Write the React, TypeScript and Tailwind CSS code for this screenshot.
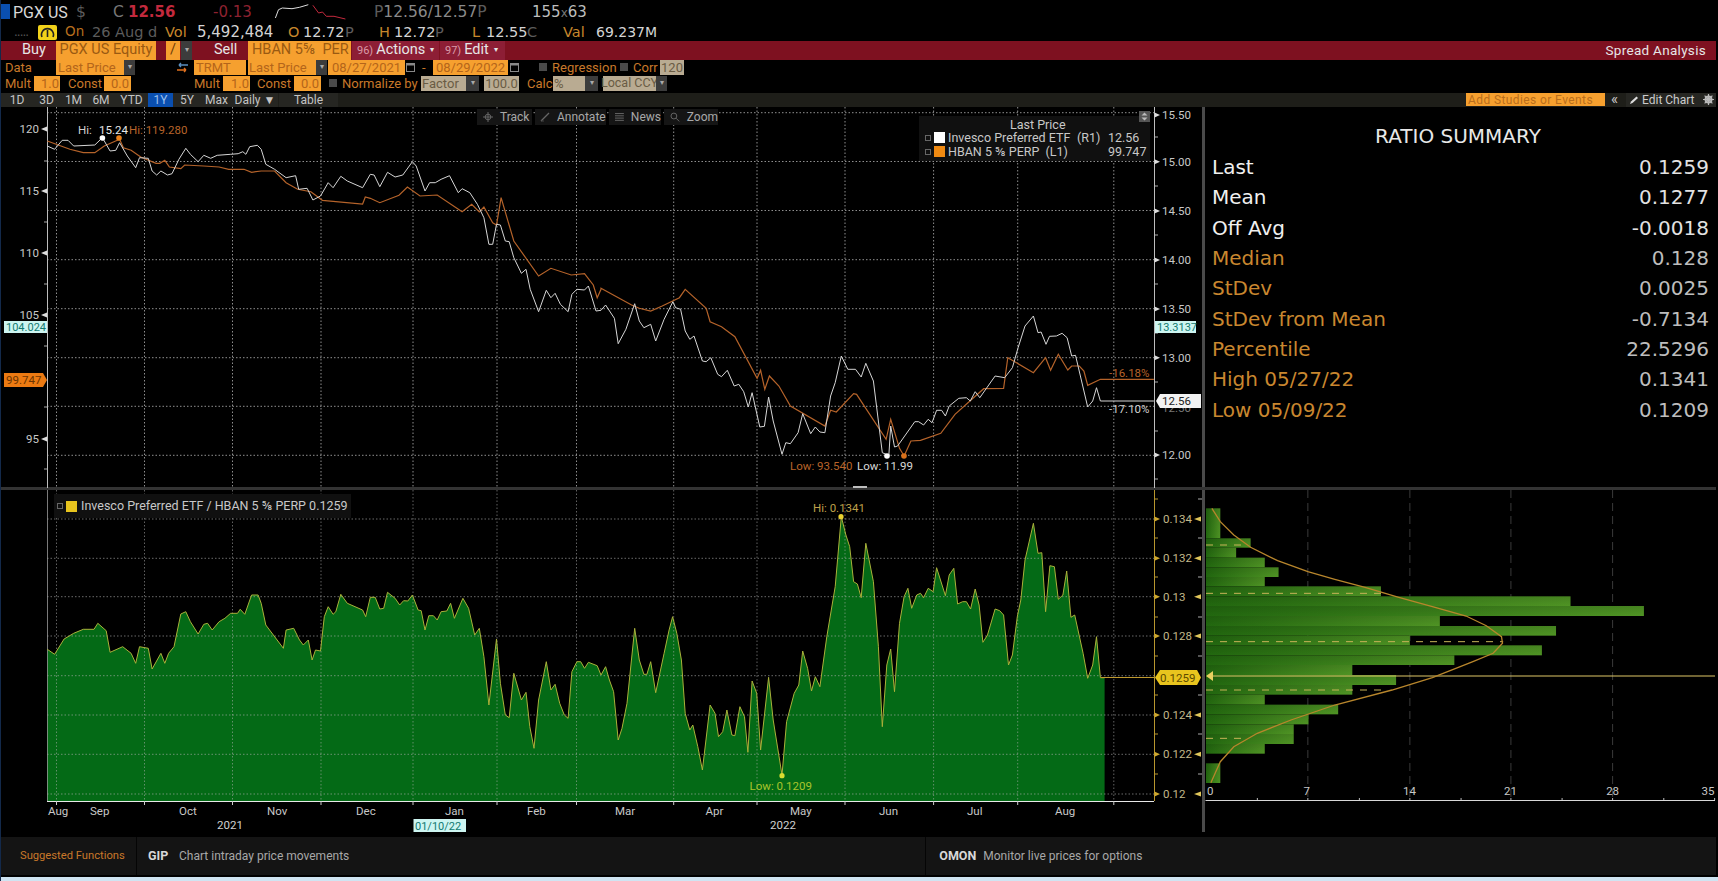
import React from 'react';

const DEJAVU = "font-[family-name:'DejaVu_Sans',sans-serif]";

// series were read off zoomed crops, so convert back to page coordinates
type P = [number, number];
const conv = (pts: P[], xOff: number, yOff: number): P[] =>
  pts.map(([x, y]) => [xOff + (x * 600) / 1568, yOff + y / 3] as P);
const toPts = (pts: P[]) => pts.map(([x, y]) => `${x.toFixed(1)},${y.toFixed(1)}`).join(' ');

const whiteSeries: P[] = [
  ...conv([[121,135],[140,145],[160,118],[175,118],[190,135],[245,132],[265,110],[285,150],[300,148],[310,125],[330,165],[352,200],[362,170],[385,172],[395,210],[407,222],[418,210],[435,222],[447,218],[465,175],[483,142],[495,160],[515,182],[530,163],[548,172],[565,163],[600,160],[620,158],[632,152],[640,160],[650,137],[670,133],[680,145],[692,190],[715,205],[745,230],[770,224],[778,265],[800,262],[815,297],[835,285],[855,245],[868,260],[888,226],[905,240],[945,260],[965,220],[975,222],[990,257],[1010,214],[1030,228],[1050,222],[1075,182],[1085,195],[1108,270],[1120,245],[1135,245],[1150,235],[1172,224],[1195,275],[1205,263],[1225,275],[1245,310],[1262,350],[1275,430],[1285,430],[1295,370],[1305,372],[1318,420],[1328,422],[1340,470],[1360,517],[1372,505],[1383,565],[1405,632],[1425,568],[1437,590],[1448,577],[1462,610],[1482,632],[1492,580],[1505,565],[1525,567],[1535,555],[1555,630],[1568,628]], 0, 100),
  ...conv([[12,462],[35,502],[45,578],[65,535],[88,458],[100,510],[112,530],[130,520],[143,570],[165,505],[188,452],[195,470],[208,475],[220,540],[232,565],[243,555],[265,630],[275,632],[287,620],[305,670],[315,677],[330,658],[348,705],[360,700],[373,722],[385,768],[395,725],[415,828],[427,826],[438,738],[450,810],[473,910],[483,875],[495,878],[515,845],[527,788],[548,848],[560,828],[572,843],[585,845],[600,735],[612,695],[628,615],[645,655],[665,655],[680,678],[692,637],[712,690],[735,905],[745,910],[752,915],[757,825],[767,888],[775,885],[820,812],[830,812],[843,822],[855,805],[865,815],[877,778],[890,778],[900,795],[910,765],[935,742],[955,740],[965,750],[978,722],[990,740],[1030,675],[1055,680],[1075,650],[1090,590],[1108,525],[1130,495],[1142,545],[1150,543],[1163,580],[1172,556],[1190,555],[1205,547],[1218,560],[1230,615],[1240,613],[1272,768],[1285,750],[1295,710],[1305,750],[1445,750]], 600, 150),
];

const orangeSeries: P[] = [
  ...conv([[121,120],[180,145],[215,155],[245,155],[270,135],[310,115],[320,140],[340,148],[365,168],[405,187],[415,187],[428,178],[440,198],[470,203],[480,192],[530,195],[570,198],[595,205],[635,205],[655,214],[680,210],[715,210],[745,245],[775,265],[810,272],[840,298],[945,309],[952,288],[965,292],[990,305],[1040,283],[1062,258],[1095,285],[1140,282],[1205,332],[1230,310],[1250,333],[1262,318],[1285,365],[1295,372],[1307,290],[1340,420],[1405,525],[1437,502],[1490,522],[1525,518],[1548,552],[1558,590],[1568,565]], 0, 100),
  ...conv([[0,412],[80,462],[100,472],[130,480],[160,465],[205,440],[220,415],[275,472],[285,512],[315,527],[350,557],[408,682],[417,658],[428,715],[440,675],[465,705],[495,765],[585,825],[600,778],[615,783],[660,728],[668,730],[745,865],[757,805],[780,892],[792,915],[810,870],[835,868],[888,847],[925,790],[1000,713],[1052,712],[1063,620],[1130,665],[1162,620],[1175,658],[1195,610],[1220,657],[1230,645],[1250,645],[1262,660],[1272,703],[1305,685],[1445,685]], 600, 150),
];

const ratioSeries: P[] = [
  ...conv([[121,478],[140,493],[165,447],[190,430],[215,418],[243,418],[253,400],[275,422],[285,487],[318,470],[340,490],[352,520],[362,470],[385,475],[395,537],[418,490],[428,520],[438,490],[452,470],[470,372],[483,365],[495,395],[515,432],[530,403],[540,400],[552,420],[570,395],[585,385],[600,370],[618,370],[625,358],[637,373],[655,315],[672,315],[680,340],[692,405],[738,475],[745,420],[765,415],[780,450],[790,465],[803,450],[813,510],[822,480],[835,483],[845,380],[855,350],[868,373],[875,365],[888,313],[905,340],[945,360],[953,380],[965,322],[978,322],[990,357],[1000,355],[1010,307],[1030,325],[1042,345],[1052,332],[1063,333],[1075,315],[1090,360],[1098,362],[1108,420],[1118,377],[1130,377],[1140,390],[1150,365],[1165,363],[1175,340],[1185,385],[1207,325],[1222,355],[1238,435],[1250,415],[1262,500],[1275,645],[1295,447],[1305,580],[1318,675],[1328,683],[1340,550],[1360,630],[1372,607],[1382,710],[1393,775],[1405,630],[1425,515],[1437,600],[1448,583],[1460,640],[1472,675],[1482,685],[1492,545],[1505,515],[1515,515],[1525,535],[1535,517],[1558,527],[1568,555]], 0, 490),
  ...conv([[12,530],[22,570],[33,605],[45,750],[55,715],[68,640],[88,415],[100,510],[112,553],[120,553],[130,515],[143,608],[165,490],[178,420],[187,380],[198,430],[210,510],[220,670],[232,720],[240,705],[253,770],[265,840],[285,645],[298,670],[307,740],[318,725],[329,660],[342,735],[350,737],[363,650],[375,680],[384,787],[395,573],[407,610],[417,780],[438,562],[450,690],[473,855],[485,695],[505,610],[517,585],[527,483],[540,535],[550,603],[560,560],[572,590],[590,440],[612,290],[628,80],[640,135],[650,170],[660,275],[670,282],[680,323],[692,160],[712,275],[725,470],[735,710],[747,525],[757,477],[767,605],[780,400],[792,320],[802,295],[812,355],[825,315],[835,310],[843,323],[855,295],[868,305],[877,233],[900,317],[910,255],[922,235],[932,342],[945,335],[955,335],[966,357],[978,297],[988,345],[998,457],[1010,435],[1030,357],[1042,362],[1052,375],[1065,525],[1075,495],[1088,380],[1097,330],[1108,210],[1130,100],[1142,190],[1152,188],[1162,365],[1173,227],[1185,230],[1195,328],[1207,315],[1217,243],[1228,382],[1238,375],[1260,490],[1272,565],[1285,525],[1295,440],[1305,563],[1316,563]], 600, 490),
];

const vGrid = [55.5, 143.5, 231.5, 320, 412, 496, 575.5, 672.7, 756, 844, 932.6, 1016.7, 1112.8];
const upperH = [111.7, 160.5, 209.5, 258.7, 307.7, 356.7, 405.3, 454.3];
const lowerH = [519, 558.3, 596.7, 636, 675.7, 715, 754.3, 794];

const Dd = ({ cls = '' }: { cls?: string }) => (
  <span className={`flex h-full items-center justify-center bg-[#3c3c3c] text-[8px] text-[#aaa] ${cls}`}>▾</span>
);

const Cal = ({ cls = '' }: { cls?: string }) => (
  <span className={`flex h-full items-center justify-center ${cls}`}>
    <svg width="9" height="10" viewBox="0 0 9 10">
      <rect x="0.5" y="1.5" width="8" height="8" fill="none" stroke="#888" />
      <rect x="0.5" y="1" width="8" height="2.5" fill="#888" />
    </svg>
  </span>
);

const Check = ({ cls = '' }: { cls?: string }) => <span className={`h-[8px] w-[8px] bg-[#4a4a4a] ${cls}`} />;

function TopRows() {
  return (
    <div className={`${DEJAVU} flex h-[41px] flex-col`}>
      <div className="flex h-[25px] items-center whitespace-nowrap text-[15.5px] leading-none">
        <span className="mb-[3px] h-[15px] w-[9px] bg-[#0a4fb0]" />
        <span className="ml-[3px] w-[52px] text-[#d8d8d8] font-[family-name:Roboto,sans-serif] text-[16px]">PGX US</span>
        <span className="ml-[11px] w-[8px] text-[#5c5c5c]">$</span>
        <span className="ml-[29px] w-[7px] text-[#777]">C</span>
        <span className="ml-[8px] w-[46px] font-bold text-[#c3293d] text-[15px]">12.56</span>
        <span className="ml-[39px] w-[41px] text-[#8e2230] text-[15px]">-0.13</span>
        <svg className="ml-[20px]" width="72" height="22" viewBox="273 4 72 22">
          <polyline points="274.4,20 277.5,11.7 281.3,10 291,10.7 298.5,9.3 307.3,6.7" fill="none" stroke="#ddd" strokeWidth="1" />
          <polyline points="311.9,7.3 317.6,15 321.5,14 325.3,18.3 333,18.3 344.4,21" fill="none" stroke="#c3293d" strokeWidth="1" />
        </svg>
        <span className="ml-[28px] w-[115px] text-[#8a8a8a]"><span className="text-[#5c5c5c]">P</span>12.56/12.57<span className="text-[#5c5c5c]">P</span></span>
        <span className="ml-[43px] text-[#bdbdbd] text-[15px]">155<span className="text-[#777] text-[12px]">x</span>63</span>
      </div>
      <div className="flex h-[14px] items-center whitespace-nowrap text-[14.5px] leading-none">
        <span className="ml-[13px] w-[21px] overflow-hidden text-[#555] text-[12px] tracking-[-1px]">.....</span>
        <span className="ml-[3px] flex h-[15px] w-[19px] items-center justify-center rounded-[2px] bg-[#f2d21a]">
          <svg width="15" height="13" viewBox="0 0 15 13">
            <path d="M2 11 A6 6 0 1 1 13 11" fill="none" stroke="#222" strokeWidth="1.6" />
            <path d="M7.5 11 L7.5 4" stroke="#222" strokeWidth="1.6" />
          </svg>
        </span>
        <span className="ml-[8px] w-[18px] text-[#b86f1e] text-[13.5px]">On</span>
        <span className="ml-[9px] w-[66px] text-[#5c5c5c]">26 Aug d</span>
        <span className="ml-[7px] w-[24px] text-[#c8872c]">Vol</span>
        <span className="ml-[8px] w-[78px] text-[#d4d4d4] text-[15px]">5,492,484</span>
        <span className="ml-[13px] w-[8px] text-[#c8872c]">O</span>
        <span className="ml-[7px] w-[42px] text-[#d4d4d4]">12.72</span>
        <span className="w-[9px] text-[#5c5c5c]">P</span>
        <span className="ml-[25px] w-[8px] text-[#c8872c]">H</span>
        <span className="ml-[7px] w-[41px] text-[#d4d4d4]">12.72</span>
        <span className="w-[11px] text-[#5c5c5c]">P</span>
        <span className="ml-[26px] w-[6px] text-[#c8872c]">L</span>
        <span className="ml-[8px] w-[41px] text-[#d4d4d4]">12.55</span>
        <span className="w-[9px] text-[#5c5c5c]">C</span>
        <span className="ml-[27px] w-[23px] text-[#c8872c]">Val</span>
        <span className="ml-[10px] text-[#d4d4d4] text-[14px]">69.237M</span>
      </div>
    </div>
  );
}

function RedBar() {
  return (
    <div className="flex h-[19px] w-[1715px] items-stretch whitespace-nowrap bg-[#7e1120] text-[14.5px] leading-none text-[#e6e6e6]">
      <span className="flex w-[55px] items-center pl-[21px]">Buy</span>
      <span className="flex w-[100px] items-center justify-center bg-[#f6a02f] text-[#9a5a12]">PGX US Equity</span>
      <span className="ml-[10px] flex w-[14px] items-center justify-center bg-[#f6a02f] text-[#6e3c08]">/</span>
      <Dd cls="ml-[1px] w-[11px] !h-auto" />
      <span className="ml-[22px] flex w-[34px] items-center">Sell</span>
      <span className="flex w-[103px] items-center overflow-hidden bg-[#f6a02f] pl-[4px] text-[#9a5a12]">HBAN 5⅝&nbsp;&nbsp;PER</span>
      <span className="ml-[1px] flex w-[87px] items-center bg-[#8d1e35] pl-[5px]"><span className="text-[11px] text-[#d99aa8]">96)</span><span className="ml-[3px]">Actions</span><span className="ml-[5px] text-[8px]">▾</span></span>
      <span className="ml-[1px] flex w-[65px] items-center bg-[#8d1e35] pl-[5px]"><span className="text-[11px] text-[#d99aa8]">97)</span><span className="ml-[3px]">Edit</span><span className="ml-[5px] text-[8px]">▾</span></span>
      <span className="ml-auto flex items-center pr-[10px] text-[13.5px] tracking-[0.3px]">Spread Analysis</span>
    </div>
  );
}

function ParamRows() {
  const org = 'flex h-full items-center bg-[#f6a02f] text-[#b4651a]';
  const tan = 'flex h-full items-center bg-[#b9ab92] text-[#6a5c44]';
  const lbl = 'text-[#c8782a]';
  return (
    <div className="flex flex-col whitespace-nowrap text-[13px] leading-none">
      <div className="flex h-[15px] items-center">
        <span className={`ml-[4px] w-[24px] ${lbl}`}>Data</span>
        <span className={`ml-[27px] w-[68px] pl-[2px] ${org}`}>Last Price</span>
        <Dd cls="w-[11px]" />
        <span className="ml-[38px] flex h-full w-[19px] items-center justify-center">
          <svg width="15" height="11" viewBox="0 0 15 11">
            <path d="M13 3 H4 M4 3 L6 1 M4 3 L6 5" stroke="#5b8fc0" strokeWidth="1.4" fill="none" />
            <path d="M2 8 H11 M11 8 L9 6 M11 8 L9 10" stroke="#e0701e" strokeWidth="1.4" fill="none" />
          </svg>
        </span>
        <span className={`ml-[2px] w-[52px] pl-[2px] ${org}`}>TRMT</span>
        <span className={`ml-[2px] w-[68px] pl-[1px] ${org}`}>Last Price</span>
        <Dd cls="w-[11px]" />
        <span className={`ml-[1px] w-[77px] justify-center ${org}`}>08/27/2021</span>
        <Cal cls="w-[11px]" />
        <span className="ml-[6px] w-[11px] text-[#c8782a]">-</span>
        <span className={`w-[75px] justify-center ${org}`}>08/29/2022</span>
        <Cal cls="w-[12px]" />
        <Check cls="ml-[19px]" />
        <span className={`ml-[5px] w-[60px] ${lbl}`}>Regression</span>
        <Check cls="ml-[8px]" />
        <span className={`ml-[5px] w-[22px] ${lbl}`}>Corr</span>
        <span className={`ml-[5px] w-[24px] justify-center ${tan}`}>120</span>
      </div>
      <div className="mt-[1px] flex h-[15px] items-center">
        <span className={`ml-[4px] w-[23px] ${lbl}`}>Mult</span>
        <span className={`ml-[6px] w-[26px] justify-end pr-[1px] ${org}`}>1.0</span>
        <span className={`ml-[8px] w-[29px] ${lbl}`}>Const</span>
        <span className={`ml-[7px] w-[27px] justify-end pr-[2px] ${org}`}>0.0</span>
        <span className={`ml-[63px] w-[23px] ${lbl}`}>Mult</span>
        <span className={`ml-[6px] w-[27px] justify-end pr-[1px] ${org}`}>1.0</span>
        <span className={`ml-[7px] w-[31px] ${lbl}`}>Const</span>
        <span className={`ml-[6px] w-[27px] justify-end pr-[2px] ${org}`}>0.0</span>
        <Check cls="ml-[8px]" />
        <span className={`ml-[5px] w-[73px] ${lbl}`}>Normalize by</span>
        <span className={`ml-[6px] w-[45px] pl-[1px] ${tan}`}>Factor</span>
        <Dd cls="w-[13px]" />
        <span className={`ml-[5px] w-[35px] justify-center ${tan}`}>100.0</span>
        <span className={`ml-[8px] w-[22px] ${lbl}`}>Calc</span>
        <span className={`ml-[4px] w-[32px] pl-[1px] ${tan}`}>%</span>
        <Dd cls="w-[13px]" />
        <span className={`ml-[5px] w-[53px] justify-center text-[12.5px] ${tan}`}>Local CCY</span>
        <Dd cls="w-[11px]" />
      </div>
    </div>
  );
}

function TabBar() {
  const t = 'flex h-full items-center justify-center bg-[#262622] text-[#c4c4c4]';
  return (
    <div className="mt-[2px] flex h-[14px] w-[1715px] items-center whitespace-nowrap bg-[#1e1e19] text-[12px] leading-none">
      <span className={`w-[32px] ${t}`}>1D</span>
      <span className={`w-[27px] ${t}`}>3D</span>
      <span className={`w-[27px] ${t}`}>1M</span>
      <span className={`w-[28px] ${t}`}>6M</span>
      <span className={`w-[33px] ${t}`}>YTD</span>
      <span className="flex h-full w-[25px] items-center justify-center bg-[#0a4fb0] text-[#9cc0ee]">1Y</span>
      <span className={`w-[28px] ${t}`}>5Y</span>
      <span className={`w-[31px] ${t}`}>Max</span>
      <span className={`w-[46px] ${t}`}>Daily ▼</span>
      <span className={`ml-[1px] w-[59px] ${t}`}>Table</span>
      <span className="ml-auto flex h-[13px] w-[139px] items-center bg-[#f6a02f] pl-[2px] text-[#b96e1c] tracking-[0.4px]">Add Studies or Events</span>
      <span className="ml-[6px] w-[9px] text-[15px] text-[#ccc]">«</span>
      <span className="ml-[6px] flex h-full w-[90px] items-center bg-[#262622] pl-[3px] text-[#ccc]">
        <svg width="11" height="10" viewBox="0 0 11 10"><path d="M1 9 L2 6.5 L7.5 1.5 L9 3 L3.5 8 Z" fill="#ddd" /></svg>
        <span className="ml-[2px]">Edit Chart</span>
        <svg className="ml-[8px]" width="11" height="11" viewBox="0 0 11 11">
          <circle cx="5.5" cy="5.5" r="3" fill="none" stroke="#bbb" strokeWidth="2" />
          <path d="M5.5 0 V11 M0 5.5 H11 M1.6 1.6 L9.4 9.4 M9.4 1.6 L1.6 9.4" stroke="#bbb" strokeWidth="1.2" />
        </svg>
      </span>
    </div>
  );
}

function UpperChart() {
  const leftLabels: [string, number][] = [['120', 128], ['115', 190], ['110', 252], ['105', 314], ['95', 438]];
  const leftMinor = [160, 221, 283, 345, 406, 468];
  const rightLabels: [string, number][] = [['15.50', 114], ['15.00', 160.7], ['14.50', 210], ['14.00', 259], ['13.50', 308], ['13.00', 356.7], ['12.00', 454]];
  const rightMinor = [136, 185, 234, 283, 332, 381, 430, 478];
  return (
    <svg className="absolute inset-0" width="1202" height="381" viewBox="0 106 1202 381" fontSize="11.5">
      {upperH.map(y => <line key={y} x1="46" x2="1153" y1={y} y2={y} stroke="#8f8f8f" strokeDasharray="1.5 2" />)}
      {vGrid.map(x => <line key={x} x1={x} x2={x} y1="106" y2="487" stroke="#8f8f8f" strokeDasharray="1.5 2" />)}
      <line x1="46.5" x2="46.5" y1="106" y2="487" stroke="#bdbdbd" />
      <line x1="1153.5" x2="1153.5" y1="106" y2="487" stroke="#bdbdbd" />
      {leftLabels.map(([t, y]) => (
        <g key={t}>
          <text x="38" y={y + 4} textAnchor="end" fill="#c8c8c8">{t}</text>
          <polygon points={`46,${y - 2.5} 46,${y + 2.5} 40,${y}`} fill="#ddd" />
        </g>
      ))}
      {leftMinor.map(y => <line key={y} x1="43" x2="46" y1={y} y2={y} stroke="#aaa" />)}
      {rightLabels.map(([t, y]) => (
        <g key={t}>
          <text x="1161" y={y + 4} fill="#c8c8c8">{t}</text>
          <polygon points={`1153.5,${y - 2.5} 1153.5,${y + 2.5} 1159,${y}`} fill="#ddd" />
        </g>
      ))}
      {rightMinor.map(y => <line key={y} x1="1154" x2="1157" y1={y} y2={y} stroke="#aaa" />)}
      <text x="1161" y="411" fill="#777">12.50</text>
      <polyline points={toPts(orangeSeries)} fill="none" stroke="#b5632a" strokeWidth="1.2" />
      <polyline points={toPts(whiteSeries)} fill="none" stroke="#d6d6d6" strokeWidth="1" />
      <circle cx="101.4" cy="137" r="2.8" fill="#fff" />
      <circle cx="118" cy="137" r="2.8" fill="#e8801a" />
      <circle cx="886" cy="455" r="2.8" fill="#fff" />
      <circle cx="903" cy="455" r="2.8" fill="#d9701a" />
      <text x="77" y="133" fill="#d0d0d0">Hi:</text>
      <text x="98" y="133" fill="#e6e6e6">15.24</text>
      <text x="128" y="133" fill="#b8642a">Hi: 119.280</text>
      <text x="789" y="469" fill="#b8642a">Low: 93.540</text>
      <text x="856" y="469" fill="#d8d8d8">Low: 11.99</text>
      <text x="1108" y="376" fill="#b8642a">-16.18%</text>
      <text x="1108" y="412" fill="#d0d0d0">-17.10%</text>
      <rect x="3" y="320" width="43" height="12" fill="#cdf5f1" />
      <text x="5" y="330" fill="#127a70" fontSize="11">104.024</text>
      <polygon points="3,372 42,372 46,379 42,386 3,386" fill="#ec7a12" />
      <text x="5" y="383" fill="#6b3400">99.747</text>
      <rect x="1154" y="320" width="41" height="12" fill="#cdf5f1" />
      <text x="1156" y="330" fill="#127a70" fontSize="11">13.3137</text>
      <polygon points="1155,400 1159,393 1200,393 1200,407 1159,407" fill="#f2f2f2" />
      <text x="1161" y="404" fill="#222">12.56</text>
      <rect x="852" y="485" width="14" height="2" fill="#bdbdbd" />
    </svg>
  );
}

function ChartToolbar() {
  const b = 'flex h-[16px] items-center bg-[#151515] text-[12px] text-[#a8a8a8] leading-none';
  return (
    <div className="absolute left-[476px] top-[2px] flex whitespace-nowrap">
      <span className={`${b} w-[55px] pl-[6px]`}>
        <svg className="mr-[7px]" width="10" height="10" viewBox="0 0 10 10">
          <circle cx="5" cy="5" r="2.8" fill="none" stroke="#666" />
          <path d="M5 0 V10 M0 5 H10" stroke="#666" />
        </svg>
        Track
      </span>
      <span className={`${b} ml-[3px] w-[71px] pl-[5px]`}>
        <svg className="mr-[7px]" width="10" height="10" viewBox="0 0 10 10">
          <path d="M1 9 L9 1" stroke="#666" strokeWidth="1.2" />
          <path d="M1 9 H4" stroke="#444" />
        </svg>
        Annotate
      </span>
      <span className={`${b} ml-[3px] w-[52px] pl-[6px]`}>
        <svg className="mr-[7px]" width="9" height="10" viewBox="0 0 9 10">
          <path d="M0 1.5 H9 M0 3.8 H9 M0 6.1 H9 M0 8.4 H9" stroke="#666" />
        </svg>
        News
      </span>
      <span className={`${b} ml-[3px] w-[54px] pl-[6px]`}>
        <svg className="mr-[7px]" width="10" height="10" viewBox="0 0 10 10">
          <circle cx="4" cy="4" r="3" fill="none" stroke="#666" />
          <path d="M6.2 6.2 L9.5 9.5" stroke="#666" />
        </svg>
        Zoom
      </span>
    </div>
  );
}

function Legend() {
  return (
    <div className="absolute left-[918px] top-[9px] w-[231px] whitespace-nowrap bg-[#101010] pb-[2px] text-[12.5px] leading-[14px] text-[#c8c8c8]">
      <div className="ml-[91px] h-[15px] pt-[2px]">Last Price</div>
      <div className="flex h-[14px] items-center">
        <span className="ml-[6px] h-[6px] w-[6px] border border-[#666]" />
        <span className="ml-[3px] h-[11px] w-[11px] bg-white" />
        <span className="ml-[3px] w-[129px]">Invesco Preferred ETF</span>
        <span className="w-[31px]">(R1)</span>
        <span>12.56</span>
      </div>
      <div className="flex h-[14px] items-center">
        <span className="ml-[6px] h-[6px] w-[6px] border border-[#666]" />
        <span className="ml-[3px] h-[11px] w-[11px] bg-[#f08a12]" />
        <span className="ml-[3px] w-[129px]">HBAN 5 ⅝ PERP&nbsp; (L1)</span>
        <span className="w-[31px]" />
        <span>99.747</span>
      </div>
    </div>
  );
}

function LowerChart() {
  const rightLabels: [string, number][] = [['0.134', 519], ['0.132', 558.3], ['0.13', 596.7], ['0.128', 636], ['0.124', 715], ['0.122', 754.3], ['0.12', 794]];
  const minor = [499, 538, 577, 617, 656, 695, 734, 774];
  const months: [string, number][] = [['Aug', 47], ['Sep', 89], ['Oct', 178], ['Nov', 266], ['Dec', 355], ['Jan', 444], ['Feb', 526], ['Mar', 614], ['Apr', 704.5], ['May', 789], ['Jun', 878], ['Jul', 966], ['Aug', 1054]];
  const line = toPts(ratioSeries);
  return (
    <svg className="absolute inset-0" width="1202" height="347" viewBox="0 490 1202 347" fontSize="11.5">
      <polygon points={`46,801 ${line} 1103.6,801`} fill="#046a16" />
      {lowerH.map(y => <line key={y} x1="46" x2="1153" y1={y} y2={y} stroke="#b0b0b0" strokeOpacity="0.6" strokeDasharray="1.5 2" />)}
      {vGrid.map(x => <line key={x} x1={x} x2={x} y1="490" y2="801" stroke="#b0b0b0" strokeOpacity="0.55" strokeDasharray="1.5 2" />)}
      <line x1="46.5" x2="46.5" y1="490" y2="801" stroke="#999" strokeOpacity="0.8" />
      <polyline points={line} fill="none" stroke="#aab13a" strokeWidth="1" />
      <line x1="1100" x2="1153" y1="677.5" y2="677.5" stroke="#c09a2e" />
      <line x1="46" x2="1153" y1="801.5" y2="801.5" stroke="#e8e8e8" />
      {vGrid.map(x => <line key={x} x1={x} x2={x} y1="801" y2="805" stroke="#ccc" />)}
      <line x1="1153.5" x2="1153.5" y1="490" y2="801" stroke="#b8962e" />
      {rightLabels.map(([t, y]) => (
        <g key={t}>
          <text x="1162" y={y + 4} fill="#c4b98a">{t}</text>
          <polygon points={`1153.5,${y - 2.5} 1153.5,${y + 2.5} 1159,${y}`} fill="#d0a92e" />
          <polygon points={`1200,${y - 2.5} 1200,${y + 2.5} 1193,${y}`} fill="#e0c65a" />
        </g>
      ))}
      {minor.map(y => (
        <g key={y}>
          <line x1="1154" x2="1157" y1={y} y2={y} stroke="#b8962e" />
          <line x1="1197" x2="1201" y1={y} y2={y} stroke="#aaa" />
        </g>
      ))}
      <polygon points="1154,677.5 1159,670 1196,670 1200,677.5 1196,685 1159,685" fill="#e8c41e" />
      <text x="1159" y="682" fill="#5c4a00">0.1259</text>
      <circle cx="840" cy="516.7" r="2.6" fill="#e8d030" />
      <circle cx="781" cy="775.7" r="2.6" fill="#d8dc30" />
      <text x="812" y="512" fill="#bfa04a">Hi: 0.1341</text>
      <text x="748.5" y="789.5" fill="#a8c42c">Low: 0.1209</text>
      {months.map(([t, x]) => <text key={`${t}${x}`} x={x} y="815" fill="#c8c8c8">{t}</text>)}
      <text x="216" y="829" fill="#d0d0d0">2021</text>
      <text x="769" y="829" fill="#d0d0d0">2022</text>
      <rect x="412.5" y="819" width="52.5" height="13" fill="#cdf5f1" />
      <text x="414" y="829.5" fill="#127a70" fontSize="11">01/10/22</text>
    </svg>
  );
}

function Histogram() {
  const hx = (z: number) => 1190 + (z * 528) / 1568;
  const hy = (z: number) => 490 + z / 3;
  const bars: [number, number, number][] = [
    [55, 145, 90], [145, 173, 180], [173, 203, 137], [203, 232, 222], [232, 261, 263], [261, 289, 222],
    [289, 319, 567], [319, 348, 1130], [348, 378, 1348], [378, 408, 742], [408, 437, 1087], [437, 466, 653],
    [466, 496, 1045], [496, 525, 785], [525, 555, 482], [555, 585, 612], [585, 614, 482], [614, 644, 222],
    [644, 673, 440], [673, 703, 352], [703, 732, 308], [732, 762, 308], [762, 791, 222], [820, 879, 90],
  ];
  const curve: P[] = [[65,55],[90,95],[130,135],[180,172],[260,212],[350,245],[430,268],[520,292],[620,322],[720,350],[820,378],[880,407],[925,440],[928,460],[900,490],[840,515],[720,563],[600,600],[430,645],[300,690],[200,730],[130,770],[90,815],[62,878]];
  const dashed: [number, number][] = [[165, 170], [310, 580], [455, 930], [600, 570], [745, 155]];
  const ticks = [200, 350, 503, 653, 805, 953, 1105, 1255, 1407, 1558];
  const labels: [string, number][] = [['0', 60], ['7', 347], ['14', 652], ['21', 952], ['28', 1255], ['35', 1538]];
  return (
    <svg width="513" height="347" viewBox="1205 490 513 347" fontSize="11.5">
      <defs>
        <linearGradient id="barFill" x1="0" x2="1" y1="0" y2="0">
          <stop offset="0" stopColor="#22680f" />
          <stop offset="1" stopColor="#4f9424" />
        </linearGradient>
        <linearGradient id="barShade" x1="0" x2="0" y1="0" y2="1">
          <stop offset="0" stopColor="#000" stopOpacity="0.12" />
          <stop offset="1" stopColor="#000" stopOpacity="0" />
        </linearGradient>
      </defs>
      {[350, 653, 953, 1255].map(z => (
        <line key={z} x1={hx(z)} x2={hx(z)} y1="490" y2="800" stroke="#3a3a3a" strokeDasharray="8 5" />
      ))}
      {bars.map(([t, b, r]) => (
        <g key={t}>
          <rect x="1206" y={hy(t)} width={hx(r) - 1206} height={(b - t) / 3} fill="url(#barFill)" />
          <rect x="1206" y={hy(t)} width={hx(r) - 1206} height={(b - t) / 3} fill="url(#barShade)" />
        </g>
      ))}
      {dashed.map(([z, r]) => (
        <line key={z} x1="1206" x2={hx(r)} y1={hy(z)} y2={hy(z)} stroke="#c8b458" strokeDasharray="7 7" />
      ))}
      <line x1="1208" x2="1715" y1="676" y2="676" stroke="#e0c868" />
      <polygon points="1206,676 1213,671 1213,681" fill="#e8d060" />
      <polyline points={toPts(curve.map(([x, y]) => [hx(x), hy(y)] as P))} fill="none" stroke="#b8862c" strokeWidth="1.3" />
      <line x1="1205.5" x2="1715" y1="800.5" y2="800.5" stroke="#d8d8d8" />
      {ticks.map(z => <line key={z} x1={hx(z)} x2={hx(z)} y1="798" y2="800" stroke="#bbb" />)}
      {labels.map(([t, z]) => <text key={t} x={hx(z)} y="795" textAnchor="middle" fill="#c8c8c8">{t}</text>)}
    </svg>
  );
}

function RatioSummary() {
  const rows: [string, string, boolean][] = [
    ['Last', '0.1259', true],
    ['Mean', '0.1277', true],
    ['Off Avg', '-0.0018', true],
    ['Median', '0.128', false],
    ['StDev', '0.0025', false],
    ['StDev from Mean', '-0.7134', false],
    ['Percentile', '22.5296', false],
    ['High 05/27/22', '0.1341', false],
    ['Low 05/09/22', '0.1209', false],
  ];
  return (
    <div className={`${DEJAVU} h-full pl-[7px] pr-[9px] pt-[17px]`}>
      <div className="h-[24px] pr-[5px] text-center text-[20px] leading-[24px] text-[#e8e8e8]">RATIO SUMMARY</div>
      <div className="mt-[4px] flex flex-col">
        {rows.map(([l, v, w]) => (
          <div key={l} className="flex h-[30.35px] items-center justify-between text-[20px]">
            <span className={w ? 'text-[#f0f0f0]' : 'text-[#c9872f]'}>{l}</span>
            <span className={w ? 'text-[#e2e2e2]' : 'text-[#bdbdbd]'}>{v}</span>
          </div>
        ))}
      </div>
    </div>
  );
}

export default function App() {
  return (
    <div className="flex h-[881px] w-[1718px] flex-col overflow-hidden border-l border-l-[#13294a] bg-black font-[family-name:Roboto,sans-serif]">
      <TopRows />
      <RedBar />
      <ParamRows />
      <TabBar />
      <div className="flex h-[381px]">
        <div className="relative w-[1201px] shrink-0">
          <UpperChart />
          <ChartToolbar />
          <Legend />
          <span className="absolute left-[1138px] top-[4px] flex h-[11px] w-[11px] flex-col items-center justify-center bg-[#555]">
            <svg width="7" height="9" viewBox="0 0 7 9">
              <path d="M3.5 0.5 L6.5 3.5 H0.5 Z M3.5 8.5 L6.5 5.5 H0.5 Z" fill="#bbb" />
            </svg>
          </span>
        </div>
        <div className="w-[3px] bg-[#4a4a4a]" />
        <div className="flex-1"><RatioSummary /></div>
      </div>
      <div className="h-[3px] w-[1715px] bg-[#333]" />
      <div className="flex h-[347px]">
        <div className="relative w-[1201px] shrink-0">
          <LowerChart />
          <div className="absolute left-[53px] top-[4px] flex h-[24px] w-[297px] items-center whitespace-nowrap bg-[#101010] text-[12.5px] text-[#c8c8c8]">
            <span className="ml-[3px] h-[6px] w-[6px] border border-[#666]" />
            <span className="ml-[3px] h-[11px] w-[11px] bg-[#e8c41e]" />
            <span className="ml-[4px]">Invesco Preferred ETF / HBAN 5 ⅝ PERP 0.1259</span>
          </div>
        </div>
        <div className="flex h-[342px] w-[3px] bg-[#4a4a4a]" />
        <Histogram />
      </div>
      <div className="flex h-[38px] w-[1715px] items-center whitespace-nowrap bg-[#141414] text-[12px] leading-none">
        <span className="flex h-full w-[136px] items-center border-r border-r-[#050505] pl-[19px] text-[11.2px] text-[#c8782a]">Suggested Functions</span>
        <span className="ml-[11px] w-[31px] text-[12.5px] font-bold text-[#d8d8d8]">GIP</span>
        <span className="text-[#a8a8a8]">Chart intraday price movements</span>
        <span className="ml-[576px] flex h-full items-center border-l border-l-[#050505] pl-[13px]">
          <span className="w-[44px] text-[12.5px] font-bold text-[#d8d8d8]">OMON</span>
          <span className="text-[#a8a8a8]">Monitor live prices for options</span>
        </span>
      </div>
      <div className="mt-[2px] h-[4px] bg-[#cfe4f2]" />
    </div>
  );
}
